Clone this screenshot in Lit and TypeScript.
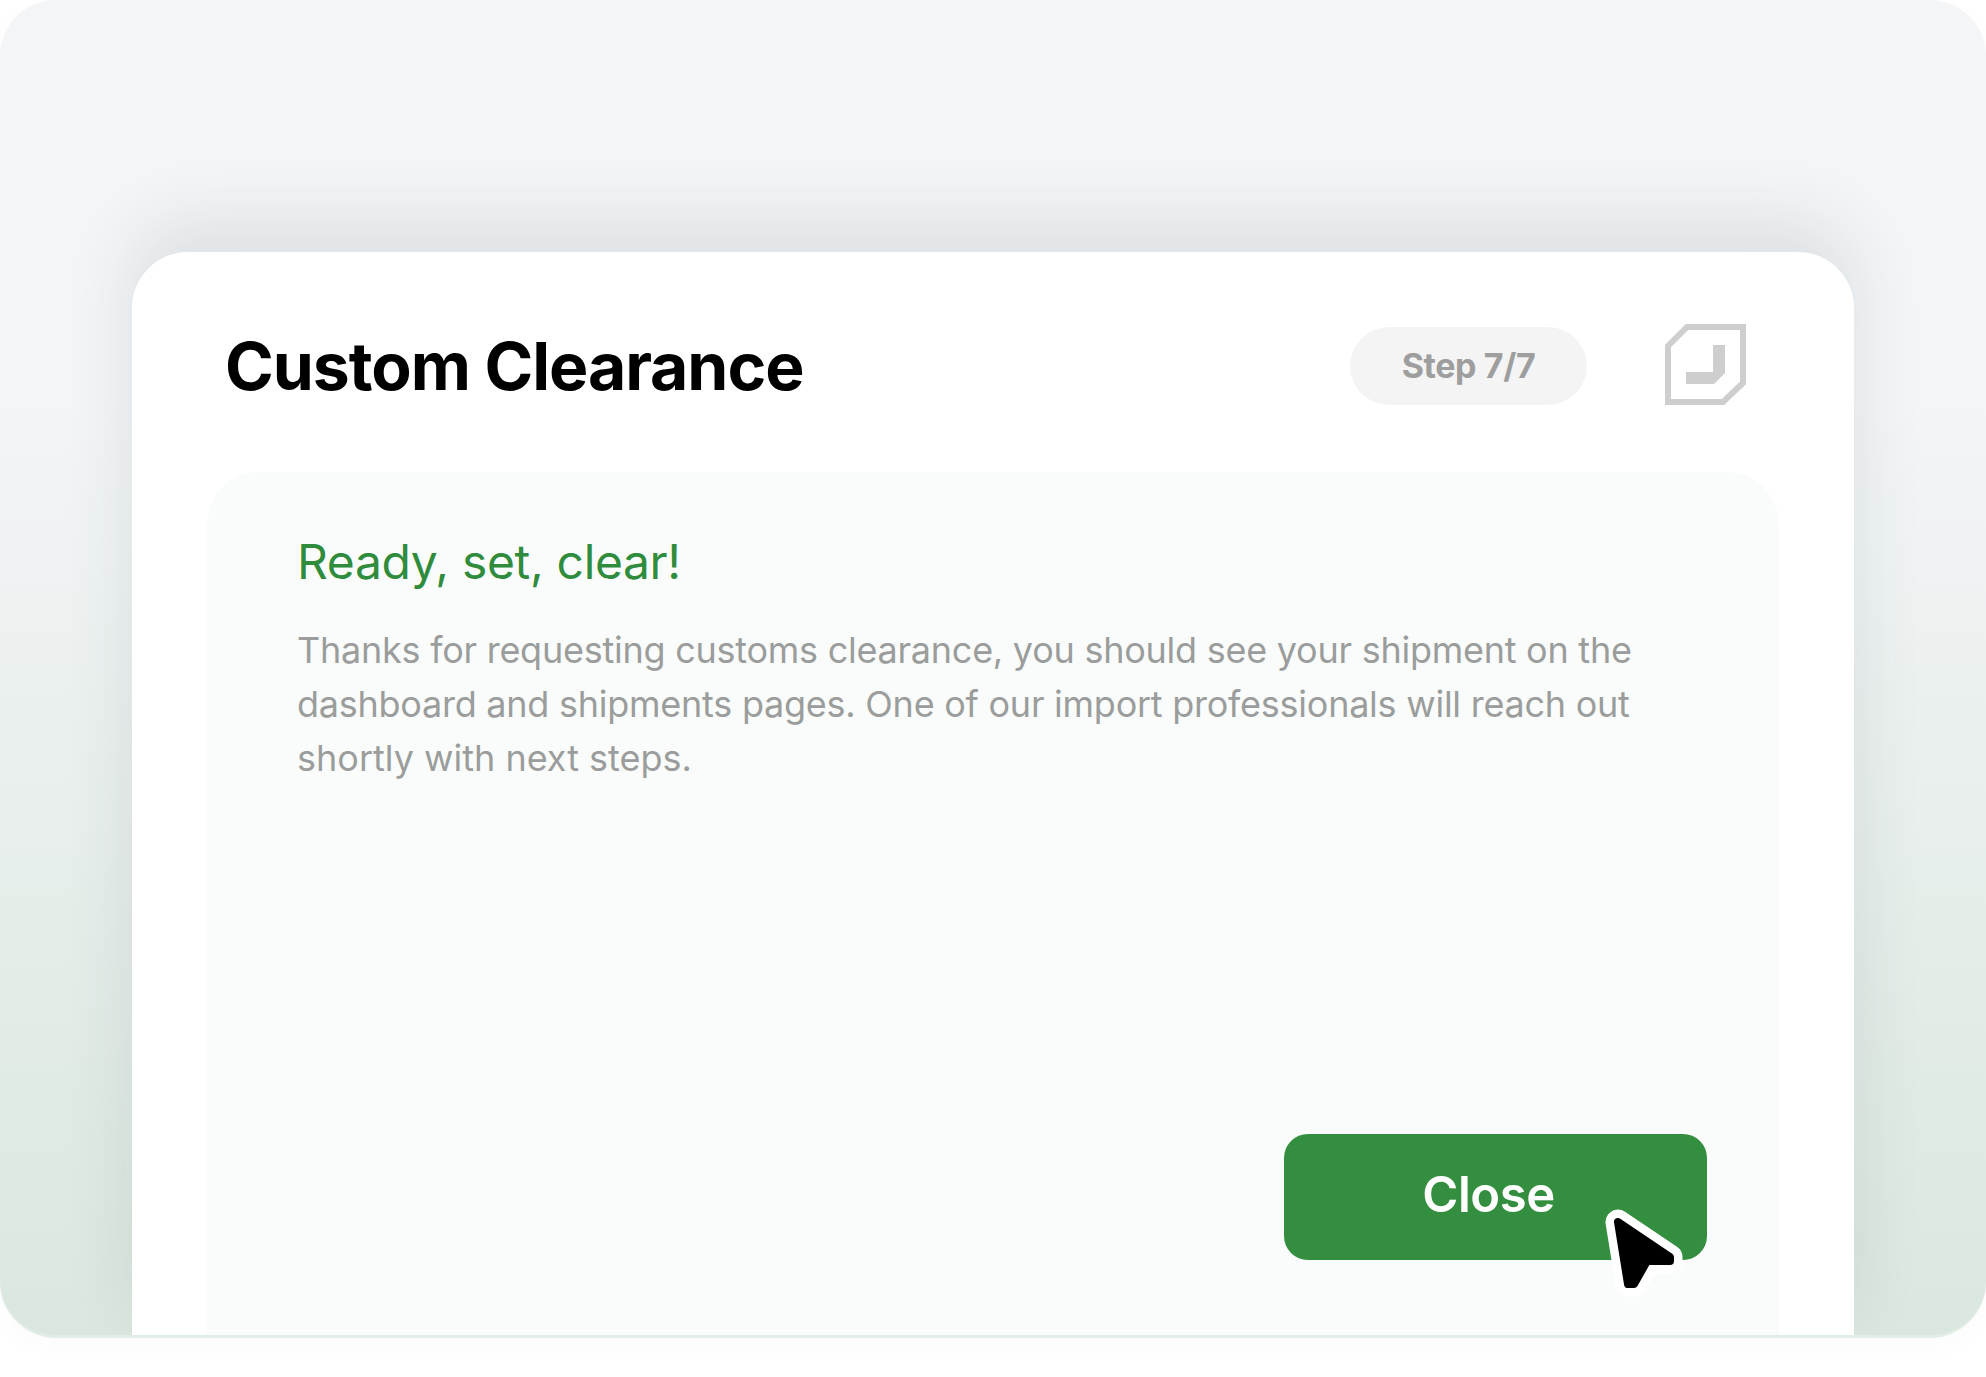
import { LitElement, html, css, svg } from "lit";
import { customElement } from "lit/decorators.js";

const stepIcon = svg`
  <path d="M22 3H78V59L58 78H3V22Z" fill="none" stroke="#cecece" stroke-width="6" />
  <path d="M48 21H60V49L49 60H21V48H48Z" fill="#cecece" />
`;

const pointer = "M18 24L70 59V63H47L34 86H28Z";

@customElement("app-root")
export class AppRoot extends LitElement {
  static styles = css`
    :host {
      display: block;
      height: 1377px;
      background: #fff;
      font-family: Inter, "Liberation Sans", sans-serif;
    }

    .frame {
      box-sizing: border-box;
      height: 1338px;
      padding: 252px 132px 0;
      display: flex;
      border-bottom: 3px solid #e1eee6;
      border-radius: 56px;
      overflow: hidden;
      background: linear-gradient(180deg, #f3f5f7 0%, #f3f5f7 30%, #dae7de 100%);
      box-shadow: 0 8px 30px rgba(0, 0, 0, 0.02);
    }

    .card {
      flex: 1;
      display: flex;
      flex-direction: column;
      padding: 0 75px;
      background: #fff;
      border-radius: 56px 56px 0 0;
      box-shadow: 0 -30px 70px rgba(50, 65, 75, 0.11);
    }

    .header {
      height: 220px;
      flex: none;
      display: flex;
      align-items: center;
      padding: 7px 33px 0 18px;
      box-sizing: border-box;
    }

    h1 {
      margin: 0;
      flex: 1;
      font-size: 66px;
      font-weight: 700;
      letter-spacing: -1.05px;
      color: #000;
    }

    .step {
      width: 237px;
      height: 78px;
      display: flex;
      align-items: center;
      justify-content: center;
      margin-right: 78px;
      border-radius: 39px;
      background: #f4f4f4;
      color: #9e9e9e;
      font-size: 34px;
      font-weight: 700;
      letter-spacing: -0.4px;
    }

    .logo {
      width: 81px;
      height: 81px;
      margin-top: -3px;
    }

    .panel {
      flex: 1;
      display: flex;
      flex-direction: column;
      padding: 62px 72px 75px 90px;
      background: #fafcfb;
      border-radius: 52px 52px 0 0;
    }

    h2 {
      margin: 0 0 33px;
      font-size: 48px;
      line-height: 56px;
      font-weight: 420;
      letter-spacing: -0.35px;
      color: #2f8c3d;
    }

    p {
      margin: 0;
      font-size: 36px;
      line-height: 54px;
      font-weight: 420;
      letter-spacing: -0.25px;
      color: #9b9d9c;
    }

    .last-line {
      letter-spacing: 0;
    }

    .actions {
      margin-top: auto;
      display: flex;
      justify-content: flex-end;
    }

    .close {
      position: relative;
      width: 423px;
      height: 126px;
      padding: 0 14px 5px 0;
      box-sizing: border-box;
      border: 0;
      border-radius: 24px;
      background: #338e3f;
      color: #fff;
      font-family: inherit;
      font-size: 49px;
      font-weight: 600;
      letter-spacing: -0.4px;
    }

    .cursor {
      position: absolute;
      left: 316px;
      top: 64px;
      width: 90px;
      height: 104px;
    }
  `;

  render() {
    return html`
      <div class="frame">
        <section class="card">
          <header class="header">
            <h1>Custom Clearance</h1>
            <div class="step">Step 7/7</div>
            <svg class="logo" viewBox="0 0 81 81">${stepIcon}</svg>
          </header>
          <div class="panel">
            <h2>Ready, set, clear!</h2>
            <p>
              Thanks for requesting customs clearance, you should see your shipment on the
              dashboard and shipments pages. One of our import professionals will reach out
              <span class="last-line">shortly with next steps.</span>
            </p>
            <div class="actions">
              <button class="close">
                Close
                <svg class="cursor" viewBox="0 0 90 104">
                  <path d=${pointer} fill="#fff" stroke="#fff" stroke-width="25" stroke-linejoin="round" />
                  <path d=${pointer} fill="#000" stroke="#000" stroke-width="8" stroke-linejoin="round" />
                </svg>
              </button>
            </div>
          </div>
        </section>
      </div>
    `;
  }
}
